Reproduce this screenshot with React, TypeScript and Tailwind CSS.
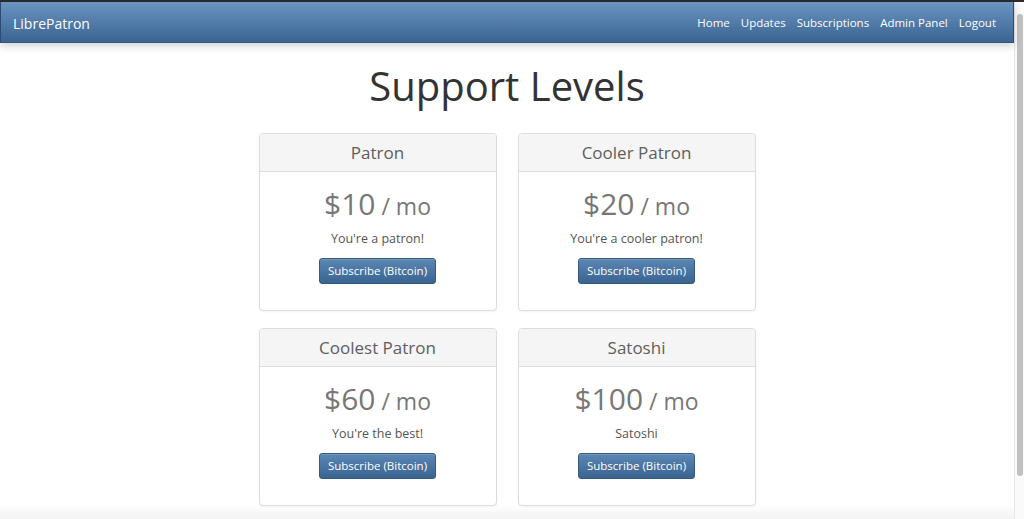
import React from "react";

type Level = {
  name: string;
  price: string;
  description: string;
};

const levels: Level[] = [
  { name: "Patron", price: "$10", description: "You're a patron!" },
  { name: "Cooler Patron", price: "$20", description: "You're a cooler patron!" },
  { name: "Coolest Patron", price: "$60", description: "You're the best!" },
  { name: "Satoshi", price: "$100", description: "Satoshi" },
];

const navLinks = ["Home", "Updates", "Subscriptions", "Admin Panel", "Logout"];

const LevelCard = ({ level }: { level: Level }) => {
  return (
    <div className="w-[238px] rounded-[4px] border border-[#dddddd] bg-white shadow-[0_1px_2px_rgba(0,0,0,0.05)] overflow-hidden">
      <div className="h-[38px] flex items-center justify-center bg-[#f5f5f5] border-b border-[#dddddd] text-[17px] text-[#5e5e5e]">
        {level.name}
      </div>
      <div className="flex flex-col items-center pt-[14px] pb-[26px]">
        <div className="h-[36px] leading-[36px] text-[#777777]">
          <span className="text-[30px]">{level.price}</span>
          <span className="text-[23px]"> / mo</span>
        </div>
        <div className="mt-[8px] h-[18px] leading-[18px] text-[12.5px] text-[#555555]">
          {level.description}
        </div>
        <button className="mt-[10px] h-[26px] px-[8px] rounded-[3px] border border-[#34597f] bg-gradient-to-b from-[#5b87b5] to-[#3a6390] text-white text-[11.5px] leading-[24px] shadow-[inset_0_1px_0_rgba(255,255,255,0.15)]">
          Subscribe (Bitcoin)
        </button>
      </div>
    </div>
  );
};

const App = () => {
  return (
    <div className="w-[1024px] h-[519px] overflow-hidden bg-white flex flex-col font-['Open_Sans',sans-serif] relative">
      <div className="h-[2px] bg-[#2b2b2b] shrink-0" />
      <div className="flex flex-1 min-h-0">
        {/* page */}
        <div className="w-[1014px] shrink-0 flex flex-col">
          <div className="h-[41px] shrink-0 flex items-center justify-between pt-[2px] bg-gradient-to-b from-[#6a94c1] to-[#3b6491] border-l border-r border-[#2c4b70] border-b border-b-[#33567e] shadow-[0_3px_8px_rgba(0,0,0,0.18)] relative z-10">
            <div className="pl-[12px] text-[14px] text-white">LibrePatron</div>
            <div className="flex gap-[11px] pr-[17px] text-[11.5px] text-white">
              {navLinks.map((link) => (
                <span key={link}>{link}</span>
              ))}
            </div>
          </div>

          <h1 className="mt-[21px] h-[44px] leading-[44px] text-center text-[40px] text-[#333333]">
            Support Levels
          </h1>

          <div className="mt-[25px] mx-auto grid grid-cols-2 gap-x-[21px] gap-y-[17px]">
            {levels.map((level) => (
              <LevelCard key={level.name} level={level} />
            ))}
          </div>
        </div>

        {/* scrollbar */}
        <div className="flex-1 border-l border-[#e6e6e6] bg-[#fafafa] flex justify-center pt-[12px]">
          <div className="w-[6px] h-[462px] rounded-full bg-[#c1c1c1]" />
        </div>
      </div>
      <div className="absolute left-0 bottom-0 w-[1014px] h-[14px] bg-gradient-to-b from-transparent to-black/[0.05] pointer-events-none" />
    </div>
  );
};

export default App;
